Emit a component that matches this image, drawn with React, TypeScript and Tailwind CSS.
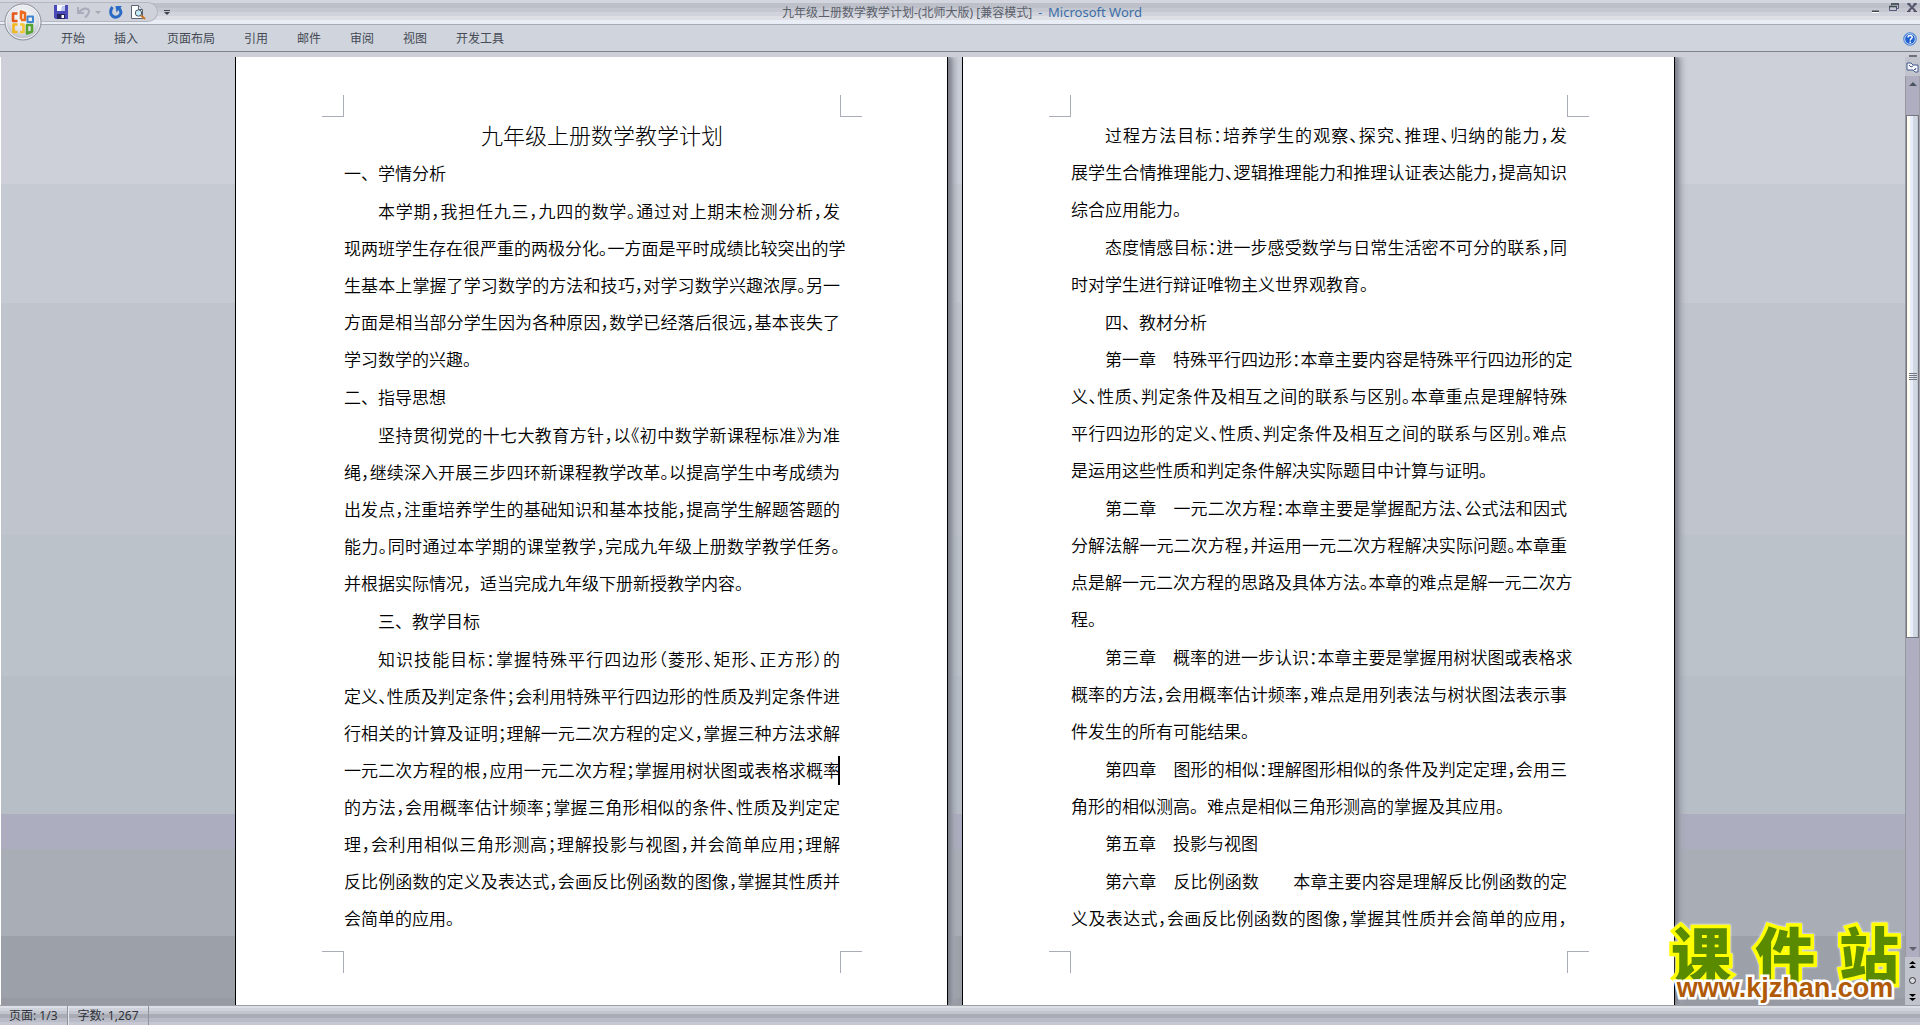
import clsx from "clsx"

interface Line {
  text: string
  indent?: boolean
  // last line of a paragraph, not stretched to the right margin
  end?: boolean
  caret?: boolean
}

const tabs = ["开始", "插入", "页面布局", "引用", "邮件", "审阅", "视图", "开发工具"]

const leftPage: Line[][] = [
  [{ text: "一、学情分析", end: true }],
  [
    { text: "本学期，我担任九三，九四的数学。通过对上期末检测分析，发", indent: true },
    { text: "现两班学生存在很严重的两极分化。一方面是平时成绩比较突出的学" },
    { text: "生基本上掌握了学习数学的方法和技巧，对学习数学兴趣浓厚。另一" },
    { text: "方面是相当部分学生因为各种原因，数学已经落后很远，基本丧失了" },
    { text: "学习数学的兴趣。", end: true },
  ],
  [{ text: "二、指导思想", end: true }],
  [
    { text: "坚持贯彻党的十七大教育方针，以《初中数学新课程标准》为准", indent: true },
    { text: "绳，继续深入开展三步四环新课程教学改革。以提高学生中考成绩为" },
    { text: "出发点，注重培养学生的基础知识和基本技能，提高学生解题答题的" },
    { text: "能力。同时通过本学期的课堂教学，完成九年级上册数学教学任务。" },
    { text: "并根据实际情况，适当完成九年级下册新授教学内容。", end: true },
  ],
  [{ text: "三、教学目标", indent: true, end: true }],
  [
    { text: "知识技能目标：掌握特殊平行四边形（菱形、矩形、正方形）的", indent: true },
    { text: "定义、性质及判定条件；会利用特殊平行四边形的性质及判定条件进" },
    { text: "行相关的计算及证明；理解一元二次方程的定义，掌握三种方法求解" },
    { text: "一元二次方程的根，应用一元二次方程；掌握用树状图或表格求概率", caret: true },
    { text: "的方法，会用概率估计频率；掌握三角形相似的条件、性质及判定定" },
    { text: "理，会利用相似三角形测高；理解投影与视图，并会简单应用；理解" },
    { text: "反比例函数的定义及表达式，会画反比例函数的图像，掌握其性质并" },
    { text: "会简单的应用。", end: true },
  ],
]

const rightPage: Line[][] = [
  [
    { text: "过程方法目标：培养学生的观察、探究、推理、归纳的能力，发", indent: true },
    { text: "展学生合情推理能力、逻辑推理能力和推理认证表达能力，提高知识" },
    { text: "综合应用能力。", end: true },
  ],
  [
    { text: "态度情感目标：进一步感受数学与日常生活密不可分的联系，同", indent: true },
    { text: "时对学生进行辩证唯物主义世界观教育。", end: true },
  ],
  [{ text: "四、教材分析", indent: true, end: true }],
  [
    { text: "第一章　特殊平行四边形：本章主要内容是特殊平行四边形的定", indent: true },
    { text: "义、性质、判定条件及相互之间的联系与区别。本章重点是理解特殊" },
    { text: "平行四边形的定义、性质、判定条件及相互之间的联系与区别。难点" },
    { text: "是运用这些性质和判定条件解决实际题目中计算与证明。", end: true },
  ],
  [
    { text: "第二章　一元二次方程：本章主要是掌握配方法、公式法和因式", indent: true },
    { text: "分解法解一元二次方程，并运用一元二次方程解决实际问题。本章重" },
    { text: "点是解一元二次方程的思路及具体方法。本章的难点是解一元二次方" },
    { text: "程。", end: true },
  ],
  [
    { text: "第三章　概率的进一步认识：本章主要是掌握用树状图或表格求", indent: true },
    { text: "概率的方法，会用概率估计频率，难点是用列表法与树状图法表示事" },
    { text: "件发生的所有可能结果。", end: true },
  ],
  [
    { text: "第四章　图形的相似：理解图形相似的条件及判定定理，会用三", indent: true },
    { text: "角形的相似测高。难点是相似三角形测高的掌握及其应用。", end: true },
  ],
  [{ text: "第五章　投影与视图", indent: true, end: true }],
  [
    { text: "第六章　反比例函数　　本章主要内容是理解反比例函数的定", indent: true },
    { text: "义及表达式，会画反比例函数的图像，掌握其性质并会简单的应用，" },
  ],
]

function OfficeLogo() {
  return (
    <svg viewBox="0 0 38 38" className="size-[38px]" aria-hidden="true">
      <defs>
        <radialGradient id="orb" cx="50%" cy="35%" r="65%">
          <stop offset="0" stopColor="#ffffff" />
          <stop offset="0.6" stopColor="#dfe2e8" />
          <stop offset="1" stopColor="#b4b8c2" />
        </radialGradient>
      </defs>
      <circle cx="19" cy="19" r="18" fill="url(#orb)" stroke="#8b8f99" />
      <circle cx="19" cy="19" r="16.8" fill="none" stroke="#f4f5f8" />
      <g fill="none" strokeWidth="2.6" strokeLinejoin="round">
        <path d="M13.500 18H9v-7.500h4.500" stroke="#e4581a" />
        <path d="M17 16.500V8.500l4 1.500v7h-4" stroke="#ee6a1c" />
        <path d="M23.500 13.500H29V19h-5.500z" stroke="#3c86d0" strokeWidth="2" />
        <path d="M13.500 21.500H9.500V29h4" stroke="#f2b61e" />
        <path d="M16 21.500h3.500V29H16" stroke="#f5c63a" />
        <path d="M23 22h5v6.500l-5 2z" stroke="#56a332" />
      </g>
    </svg>
  )
}

function SaveIcon() {
  return (
    <svg viewBox="0 0 14 14" className="size-3.5" aria-hidden="true">
      <path d="M0 0h14v14H1.5L0 12.5z" fill="#4a49b8" />
      <path d="M3 0h8v6H3z" fill="#f4f6ff" />
      <path d="M8 1h3v5H7z" fill="#b9c6ee" />
      <path d="M3 9h8v5H3z" fill="#23235e" />
      <path d="M7.500 10h2.500v3H7.500z" fill="#fff" />
    </svg>
  )
}

function UndoIcon() {
  return (
    <svg viewBox="0 0 14 14" className="size-3.5" fill="none" aria-hidden="true">
      <path d="M1 2v6h6" stroke="#a9adbb" strokeWidth="2" />
      <path d="M2 7.500C5 3 12 2 12 6.500c0 3-2 4-4 6" stroke="#a9adbb" strokeWidth="2.200" />
    </svg>
  )
}

function RedoIcon() {
  return (
    <svg viewBox="0 0 14 14" className="size-3.5" fill="none" aria-hidden="true">
      <path d="M3.500 2C1 5 1 9 3.500 11s6.500 1.500 8-2c.8-2 .3-4-1.500-5.500" stroke="#2a6ac4" strokeWidth="3" />
      <path d="M6.500 1H13L7.500 7.500z" fill="#2a6ac4" />
    </svg>
  )
}

function PreviewIcon() {
  return (
    <svg viewBox="0 0 15 15" className="size-[15px]" aria-hidden="true">
      <path d="M.5.5h7l4 4v9H.5z" fill="#fff" stroke="#5c6474" />
      <path d="M7.500.5v4h4" fill="#dfe4ee" stroke="#5c6474" />
      <circle cx="7.500" cy="8" r="3.200" fill="#c6ecf6" stroke="#44505e" />
      <path d="m10 10.500 4 3.500" stroke="#c9741f" strokeWidth="2.200" />
    </svg>
  )
}

function TitleBar() {
  return (
    <header className="relative flex h-6 items-center bg-[linear-gradient(#d3d6de_0_3px,#bdc0c9_3px_8px,#c5c8d0_8px_12px,#d0d3db_12px_16px,#dddfe4_16px_20px,#e9edf5_20px)]">
      <div className="flex h-5 w-[158px] items-center rounded-r-full border border-l-0 border-[#b4b7c0] bg-[#cfd2da] pl-[54px]">
        <button aria-label="保存"><SaveIcon /></button>
        <button aria-label="撤消" className="ml-[9px]"><UndoIcon /></button>
        <span className="ml-1 border-x-[3px] border-t-[3px] border-x-transparent border-t-[#a5a8b4]" />
        <button aria-label="重复" className="ml-2"><RedoIcon /></button>
        <button aria-label="打印预览" className="ml-2"><PreviewIcon /></button>
      </div>
      <button aria-label="自定义快速访问工具栏" className="ml-1.5 flex flex-col items-center gap-px">
        <span className="h-px w-1.5 bg-[#3f434c]" />
        <span className="border-x-[3px] border-t-[3px] border-x-transparent border-t-[#3f434c]" />
      </button>
      <h1 className="flex flex-1 items-center justify-center gap-1.5 pr-4 pt-0.5 text-xs text-[#5c606b]">
        <span>九年级上册数学教学计划-(北师大版) [兼容模式]</span>
        <span className="text-[#3c6fa9]">-</span>
        <span className="text-[13px] text-[#3c6fa9]">Microsoft Word</span>
      </h1>
      <div className="flex w-[150px] justify-end gap-2 pb-2 pr-[3px]">
        <button aria-label="最小化">
          <svg viewBox="0 0 10 10" className="size-2.5"><path d="M1 7.500h7v2H1z" fill="#3e4a50" /><path d="M1 9.500h7" stroke="#fff" /></svg>
        </button>
        <button aria-label="还原">
          <svg viewBox="0 0 10 10" className="size-2.5"><path d="M2.500 2.500V1h7v4.500H8M.5 3.500h7v4h-7z" fill="none" stroke="#5a5878" /><path d="M2 1h8M0 3.500h8" stroke="#3e4a50" strokeWidth="1.600" /></svg>
        </button>
        <button aria-label="关闭">
          <svg viewBox="0 0 10 10" className="size-2.5"><path d="m1.500 1 7 7m0-7-7 7" stroke="#56546f" strokeWidth="2" /><path d="M0 .8h3.500m3 0H10M0 8.500h3.500m3 0H10" stroke="#4b4a62" strokeWidth="1.200" /></svg>
        </button>
      </div>
      <button aria-label="Office 按钮" className="absolute left-1 top-[3px] z-10"><OfficeLogo /></button>
    </header>
  )
}

function Ribbon() {
  return (
    <nav className="flex h-7 items-center justify-between border-b border-t border-b-[#808289] border-t-[#a6abb5] bg-[#cfd4dd] pl-[61px] pr-[3px] pt-0.5">
      <div className="flex gap-[29px] text-xs text-[#454a54]">
        {tabs.map((tab) => (
          <button key={tab}>{tab}</button>
        ))}
      </div>
      <button aria-label="帮助">
        <svg viewBox="0 0 14 14" className="size-3.5" fill="none">
          <circle cx="7" cy="7" r="6.300" fill="#1f5fd0" stroke="#5a8fd0" />
          <circle cx="7" cy="7" r="5.300" stroke="#eef4ff" strokeWidth="0.800" />
          <path d="M5 5.500c0-3 4.200-2.500 4.200-.3C9.200 6.800 7.200 6.500 7.200 8.500M7.200 9.500v1.500" stroke="#fff" strokeWidth="1.500" />
        </svg>
      </button>
    </nav>
  )
}

function Corners({ top }: { top?: boolean }) {
  const edge = top ? "border-b" : "border-t"
  return (
    <div className="-mx-[22px] flex justify-between">
      <span className={clsx("h-[22px] w-[22px] border-r border-[#a9adb8]", edge)} />
      <span className={clsx("h-[22px] w-[22px] border-l border-[#a9adb8]", edge)} />
    </div>
  )
}

function Page({ title, paragraphs }: { title?: string; paragraphs: Line[][] }) {
  return (
    <article className="flex w-[713px] flex-col border-x border-black bg-white pb-8 pl-[108px] pr-[107px] pt-[38px] text-black shadow-[3px_0_4px_#7d8089,7px_0_6px_#a3a6b2]">
      <Corners top />
      <div className="mb-[14px] flex flex-1 flex-col justify-between text-[17px] font-[350] leading-[37px]">
        {title && <h2 className="pl-5 text-center text-[22px] font-light">{title}</h2>}
        {paragraphs.map((lines) => (
          <p key={lines[0].text}>
            {lines.map((line) => (
              <span
                key={line.text}
                className={clsx(
                  "relative block whitespace-nowrap",
                  line.indent && "pl-[34px]",
                  !line.end && "[text-align-last:justify] [font-feature-settings:'halt']"
                )}
              >
                {line.text}
                {line.caret && <span className="absolute right-0 top-1 h-[29px] w-0.5 bg-black" />}
              </span>
            ))}
          </p>
        ))}
      </div>
      <Corners />
    </article>
  )
}

function ScrollBar() {
  return (
    <aside className="flex w-[15px] flex-col bg-[#c1c4cd]">
      <span className="mx-auto -mt-0.5 mb-0.5 h-0.5 w-2 bg-[#6c7078]" />
      <button aria-label="标尺" className="flex h-[17px] items-center justify-center">
        <svg viewBox="0 0 13 13" className="size-[13px]"><path d="M1 2h4l2 2h5v7H9L7 9H1z" fill="#f7f7fb" stroke="#41598c" /><path d="m3 4 2 2 2-1m1 3 1 1 1-2" fill="none" stroke="#41598c" /></svg>
      </button>
      <div className="flex flex-1 flex-col border-l border-r border-l-[#96979f] border-r-[#a0a1ab] bg-[#afaec1]">
        <button aria-label="向上滚动" className="flex h-[39px] justify-center pt-1.5">
          <span className="h-0 border-x-[4px] border-b-[4px] border-x-transparent border-b-[#4b5560]" />
        </button>
        <div className="flex h-[523px] flex-col items-center justify-center gap-px border border-[#74767f] bg-[linear-gradient(90deg,#fffdf0_0_3px,#e8eefb_3px_6px,#d0d8e4_6px_10px,#c2c6cf_10px)]">
          <span className="h-px w-2 bg-[#74767f]" />
          <span className="h-px w-2 bg-[#74767f]" />
          <span className="h-px w-2 bg-[#74767f]" />
          <span className="h-px w-2 bg-[#74767f]" />
        </div>
        <button aria-label="向下滚动" className="mt-auto flex justify-center pb-1.5">
          <span className="border-x-[4px] border-t-[4px] border-x-transparent border-t-[#5d626c]" />
        </button>
      </div>
      <div className="flex h-12 flex-col items-center justify-around">
        <button aria-label="前一页">
          <svg viewBox="0 0 7 8" className="h-2 w-[7px]"><path d="M3.500 0 7 3H0zM3.500 4 7 7H0z" /></svg>
        </button>
        <button aria-label="选择浏览对象" className="size-[7px] rounded-full border border-[#33363c] bg-[#d8d9dc]" />
        <button aria-label="下一页">
          <svg viewBox="0 0 7 8" className="h-2 w-[7px]"><path d="M0 1h7L3.500 4zM0 5h7L3.500 8z" /></svg>
        </button>
      </div>
    </aside>
  )
}

function Watermark() {
  return (
    <div className="absolute bottom-1 right-1.5 w-[228px]">
      <div className="flex justify-between text-[60px] font-black leading-[40px] text-[#5a8a00] [-webkit-text-stroke:7px_#ffff00] [paint-order:stroke_fill] drop-shadow-[0_0_1px_#ffffff]">
        <span>课</span>
        <span>件</span>
        <span>站</span>
      </div>
      <a
        href="#"
        className="relative block text-center font-['Liberation_Sans',sans-serif] text-[27px] font-bold leading-[26px] text-[#b05a08] [-webkit-text-stroke:5px_#ffffff] [paint-order:stroke_fill]"
      >
        www.kjzhan.com
      </a>
    </div>
  )
}

function StatusBar() {
  return (
    <footer className="flex h-5 items-stretch border-t border-[#9c9fa6] bg-[linear-gradient(#dcdfe5_0_2px,#cfd2da_2px_5px,#c2c5cd_5px_8px,#a9acb4_8px_12px,#b9bcc6_12px_16px,#c5c8d2_16px)] text-xs leading-[19px] text-[#2f333b]">
      <span className="border-r border-[#8f929b] px-[9px]">页面: 1/3</span>
      <span className="border-x border-l-[#e6e8ee] border-r-[#8f929b] px-[9px]">字数: 1,267</span>
    </footer>
  )
}

export default function App() {
  return (
    <div className="flex min-h-screen flex-col bg-[#cdced6] font-['Noto_Sans','Noto_Sans_CJK_SC',sans-serif]">
      <TitleBar />
      <Ribbon />
      <div className="mt-[5px] flex flex-1">
        <main className="relative flex flex-1 justify-center gap-[14px] overflow-hidden border-l border-white bg-[linear-gradient(#cdd0d9_0_13.4%,#c6cad2_13.4%_25.9%,#c0c4cc_25.9%_50.4%,#bcc2ca_50.4%_65.3%,#b8bec6_65.3%_79.9%,#adadc0_79.9%_83.5%,#a9aeb6_83.5%_92.7%,#9ca0a8_92.7%_99.3%,#979aa2_99.3%)] pl-1">
          <Page title="九年级上册数学教学计划" paragraphs={leftPage} />
          <Page paragraphs={rightPage} />
          <Watermark />
        </main>
        <ScrollBar />
      </div>
      <StatusBar />
    </div>
  )
}
